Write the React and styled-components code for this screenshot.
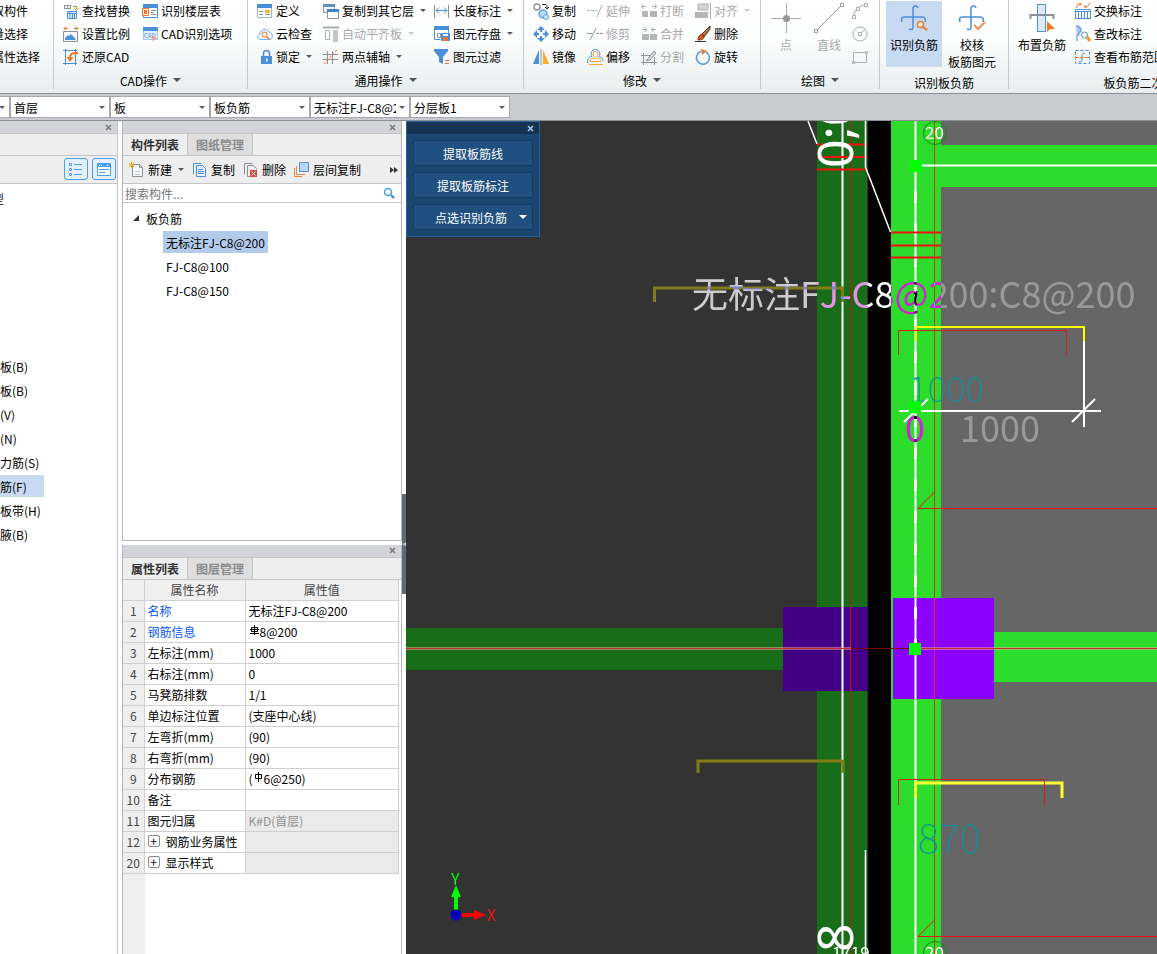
import React, { useState } from 'react'
import styled, { createGlobalStyle } from 'styled-components'

const Global = createGlobalStyle`
  * { box-sizing: border-box; }
  body {
    margin: 0;
    background: #fff;
    color: #000;
    font: 12px/17px "Noto Sans CJK SC", "Open Sans", sans-serif;
    font-kerning: none;
  }
  button, input, select { font: inherit; font-kerning: none; color: inherit; }
  button { border: 0; padding: 0; background: none; }
`

/* ---------- icons ---------- */

const B = '#4a8fdc'
const O = '#ee7722'
const G = '#8c9299'
const D = '#aaadb0'

const icons = {
  find: (
    <>
      <path d="M1 2.5h7M1 5.5h7M1.5 2v4M4.5 2v4M7.5 2v4" stroke={G} />
      <path d="M10 3.5h3.5V6M11.5 5.5l2 2 2-2" stroke={O} />
      <path d="M4.5 8.5h9v7h-9z" stroke={B} fill="#e3effb" />
      <path d="M4.5 10.5h9M7 9v7M9.5 11v4M11.5 11v4" stroke={B} />
    </>
  ),
  scale: (
    <>
      <path d="M1 2.5h4M3 .5l-2 2 2 2M11 2.5h4M13 .5l2 2-2 2" stroke={O} />
      <path d="M.5 5.5h14v10H.5z" stroke={G} fill="#f5f7f9" />
      <path d="M2 14v-2l3-3 1 1 2-2 3 3 2 3z" fill={B} />
    </>
  ),
  restore: (
    <>
      <path d="M0 1.5h14M2.5 0v16M12.5 0v16M0 14.5h14" stroke={B} />
      <path d="M15 4h-3c-4 0-5 2-5 5" stroke={O} strokeWidth="2" />
      <path d="M3.500 8h7L7 13z" fill={O} />
    </>
  ),
  floorTable: (
    <>
      <path d="M1.500 2.500h14v12h-14z" stroke={B} fill="#fff" />
      <path d="M1 1h15v4H1z" fill={B} />
      <path d="M.5 5.500h6v7h-6z" stroke={O} fill="#fff" />
      <path d="M2 7h3v4H2z" fill={O} />
      <path d="M9 7.500h5M9 9.500h3M9 11.500h5" stroke={G} />
    </>
  ),
  cadOption: (
    <>
      <path d="M1.500 2.500h14v11h-14z" stroke="#a9c8ea" fill="#e3effb" />
      <path d="M1 1h15v4H1z" fill={B} />
      <text x="2" y="12" fontSize="6" fill={B}>CAD</text>
      <path d="M10 9l5 4-3 0-1 3z" fill="#f49a6a" />
    </>
  ),
  define: (
    <>
      <path d="M.5 2.500h14v12H.5z" stroke="#a5b6c8" fill="#fff" />
      <path d="M0 1h15v4H0z" fill={B} />
      <path d="M2 8.500h4M2 11.500h4" stroke={G} />
      <path d="M8 7h5v3H8z" fill="#f8b43a" />
      <path d="M8 11.500h5" stroke={G} />
    </>
  ),
  cloud: (
    <>
      <path d="M4 13.500C.5 13.500-.5 9 3 8c0-5 7-6.500 9-2 4 0 4.500 7 1 7.500z" stroke="#79aee6" fill="#eef6fd" />
      <circle cx="7.500" cy="8.500" r="2.500" stroke={O} />
      <path d="M9.500 10.500l2.500 2.500" stroke={O} strokeWidth="1.500" />
    </>
  ),
  lock: (
    <>
      <path d="M6.500 8V4.500a3 3 0 0 1 6 0V8" stroke={B} strokeWidth="1.500" />
      <path d="M4 7h11v8H4z" fill={B} />
      <path d="M9 9.500h1.500v3H9z" fill="#fff" />
    </>
  ),
  copyFloor: (
    <>
      <path d="M.5 2.500h11v7H.5z" stroke={G} fill="#fff" />
      <path d="M0 1h12v3H0z" fill="#5d8fc9" />
      <path d="M4.500 7.500h11v8h-11z" stroke={G} fill="#fff" />
      <path d="M4 6h12v3H4z" fill="#3f81d2" />
    </>
  ),
  align: (
    <>
      <path d="M0 1.500h16" stroke={D} strokeWidth="2" />
      <path d="M2.500 4.500h4v9h-4z" stroke={D} />
      <path d="M10 4h5v12h-5z" fill="#c4c6c8" />
    </>
  ),
  axis: (
    <>
      <path d="M0 5.500h15M0 10.500h15M4.500 2v13M9.500 2v13" stroke={G} />
      <path d="M1 15L14 1" stroke={O} strokeDasharray="3 1" />
    </>
  ),
  length: (
    <>
      <path d="M.5 2v13M14.500 2v13" stroke={G} />
      <path d="M2 7.500h11M5 4.500l-3 3 3 3M10 4.500l3 3-3 3" stroke={B} />
    </>
  ),
  save: (
    <>
      <path d="M.5 13.500v-12h14v6M.5 13.500h6" stroke={B} fill="#fff" />
      <path d="M0 0h15v4H0z" fill={B} />
      <path d="M3.500 7.500h3v4h-3z" stroke={G} />
      <path d="M7.500 7.500h8v7h-8z" fill={B} stroke={B} />
      <path d="M9 8h5v2H9z" fill="#fff" />
      <path d="M9 11h5v4H9z" fill={O} />
    </>
  ),
  filter: (
    <>
      <path d="M0 0h14v2L9 8v7l-4-2V8L0 2z" fill={B} />
      <path d="M11 11.500h4M11 14.500h4" stroke={O} />
    </>
  ),
  copy: (
    <>
      <circle cx="4" cy="4" r="3" stroke={G} strokeWidth="1.500" fill="#fff" />
      <circle cx="10" cy="11" r="4" stroke="#5ba2e3" strokeWidth="1.500" fill="#b9dbf8" />
      <circle cx="13" cy="14" r="2.500" stroke="#5ba2e3" fill="#cfe6fa" />
      <path d="M9 1.500h3c2 0 2 1 2 4M12 4l2 2 2-2" stroke="#222" />
    </>
  ),
  extend: <path d="M0 7.500h3M4 7.500h3M8 7.500h2M10 14l5-12" stroke={D} />,
  trim: <path d="M0 7.500h5M3 14L9 2M9 7.500h3M13 7.500h3" stroke="#8f9499" />,
  breakUp: (
    <>
      <path d="M1 8h6v6H1zM9 8h7v6H9z" fill="#b3b5b7" />
      <path d="M0 3.500h5M2.500 1l-2 2.500 2 2.500M11 3.500h5M13.500 1l2 2.500-2 2.500" stroke={D} />
    </>
  ),
  merge: (
    <>
      <path d="M1 8h15v6H1z" fill="#b3b5b7" />
      <path d="M8.500 8v6" stroke="#fff" />
      <path d="M1 3.500h5M3.500 1l2 2.500-2 2.500M10 3.500h5M12.500 1l-2 2.500 2 2.500" stroke={D} />
    </>
  ),
  split: (
    <>
      <path d="M0 6.500h9M0 13.500h16M2.500 4v12M13.500 8v8" stroke="#8f9499" />
      <path d="M5 12L13 2l2 2-6 7z" fill="#d4d6d8" stroke="#8f9499" />
    </>
  ),
  alignTo: (
    <>
      <path d="M3 1h10v6H3z" fill="#d3d5d7" stroke={D} />
      <path d="M0 9h13v6H0z" fill="#b3b5b7" />
      <path d="M15.500 0v16" stroke={D} />
    </>
  ),
  move: (
    <g fill={B}>
      <path d="M8 0l4 4H9v2H7V4H4zM8 16l4-4H9v-2H7v2H4zM0 8l4-4v3h2v2H4v3zM16 8l-4-4v3h-2v2h2v3z" />
    </g>
  ),
  brush: (
    <>
      <path d="M15 0L7 8l2 3 6-8z" fill="#a9794a" stroke="#4f3219" />
      <path d="M7 8l2 3c-1 3-4 3-6 3 0-2 1-5 4-6z" fill="#d9551c" stroke="#8c2f0d" />
      <path d="M0 15.500h11" stroke="#333" />
    </>
  ),
  mirror: (
    <>
      <path d="M6 1v14H0z" fill={B} />
      <path d="M10 1v14h6z" fill="#f8ae2c" />
      <path d="M8 0v16" stroke={G} />
    </>
  ),
  offset: (
    <>
      <path d="M1.500 13.500h-1c0-4 1-5.500 4.500-6-2-3-.5-7 3.500-7s5.500 4 3.500 7c3 .5 4 2 4 5" stroke="#5b9bdf" fill="#e3f0fc" />
      <path d="M3 12.500c0-2 1-3 4.500-3 0-2-1.500-3-1.500-4.500a2.500 2.500 0 0 1 5 0c0 1.500-1.500 2.500-1.500 4.500 3.500 0 4.500 1 4.500 3z" stroke="#f5a623" fill="#fff" />
      <path d="M2 15.500h14" stroke="#f5a623" />
    </>
  ),
  rotate: (
    <>
      <path d="M6 2.500a6.500 6.500 0 1 0 5 .5" stroke="#5b9bdf" strokeWidth="1.500" />
      <path d="M6 0l6 2-5 4z" fill={O} />
    </>
  ),
  arc: (
    <>
      <path d="M2 13C2 7 6 3 13 2" stroke={D} />
      <path d="M.5 12.500h3v3h-3zM12.500.5h3v3h-3zM4.500 4.500h3v3h-3z" stroke={D} fill="#fff" />
    </>
  ),
  circle: (
    <>
      <circle cx="8" cy="8" r="7" stroke={D} />
      <path d="M6.500 6.500h3v3h-3z" stroke={D} fill="#fff" />
      <path d="M9 7l4-4" stroke={D} />
    </>
  ),
  rect: (
    <>
      <path d="M1.500 3.500h13v10h-13z" stroke={D} />
      <path d="M.5 12.500h2v2h-2zM13.500 2.500h2v2h-2z" stroke={D} fill="#fff" />
    </>
  ),
  swap: (
    <>
      <path d="M1 5l2-4h4M5 0v3M9 4h3l3-4M10 2v3" stroke={O} />
      <path d="M.5 6.500h15M.5 8.500h15M.5 7v8M3.500 8v8M6.500 8v8M9.500 8v8M12.500 8v8M15.500 7v8M0 15.500h16" stroke={B} />
    </>
  ),
  edit: (
    <>
      <path d="M1 0h3v2h2v4H4v3H2v6" stroke={B} fill="#a9ccf3" />
      <circle cx="9.500" cy="9" r="3" stroke={B} fill="#fff" />
      <path d="M12 11l3 4" stroke="#f29a1f" strokeWidth="3" />
    </>
  ),
  range: (
    <>
      <path d="M.5 1.500h14v13H.5z" stroke={B} strokeDasharray="3 2" />
      <path d="M0 8.500h15" stroke={O} strokeDasharray="4 1" />
      <path d="M10 4.500c-2-1-3 0-3 2v5c0 1-1 2-3 1" stroke={B} />
    </>
  ),
  newItem: (
    <>
      <path d="M3.500 2.500h7l3 3v9h-10z" stroke={G} fill="#f5f7f8" />
      <path d="M10.500 2.500v3h3" stroke={G} />
      <path d="M6 9.500h5M6 12.500h5" stroke="#c6cacd" />
      <path d="M0 1l5 4M5 1L0 5M2.500 0v6M0 3h5" stroke="#f5a623" />
    </>
  ),
  copyDoc: (
    <>
      <path d="M1.500 12.500v-11h8" stroke={B} />
      <path d="M4.500 3.500h6l3 3v8h-9z" stroke={B} fill="#eaf3fc" />
      <path d="M6 7.500h5M6 9.500h6M6 11.500h6" stroke={B} />
    </>
  ),
  removeDoc: (
    <>
      <path d="M1.500 12.500v-11h8M4.500 14.500v-11h6l3 3v1M4.500 14.500H7" stroke={G} />
      <path d="M7 8h7v7H7z" fill="#d94a4a" />
      <path d="M8.500 9.500l4 4M12.500 9.500l-4 4" stroke="#fff" />
    </>
  ),
  layers: (
    <>
      <path d="M.5 6v8.500H8" stroke="#f0883a" />
      <path d="M2.500 4v8.500H11" stroke="#f0883a" />
      <path d="M5.500.5h9v9h-9z" stroke="#5590dd" fill="#b9d4fb" />
    </>
  ),
  search: (
    <>
      <circle cx="7" cy="7" r="3.500" stroke="#4aa3df" strokeWidth="1.500" />
      <path d="M10 10l3 3" stroke="#2e86c8" strokeWidth="2" />
    </>
  ),
  listView: (
    <>
      <path d="M1.500 2.500h2v2h-2zM1.500 7.500h2v2h-2zM1.500 12.500h2v2h-2z" stroke="#4a9ff0" />
      <path d="M6 3.500h8M6 8.500h8M6 13.500h8" stroke="#4a9ff0" />
    </>
  ),
  formView: (
    <>
      <path d="M1.500 2.500h13v12h-13z" stroke="#4a9ff0" fill="#fff" />
      <path d="M1 2h14v4H1z" fill="#4a9ff0" />
      <path d="M3 4.500h4M11 4.500h2" stroke="#fff" strokeDasharray="1 1" />
      <path d="M3 8.500h10M3 11.500h6" stroke="#4a9ff0" />
    </>
  ),
}

const bigIcons = {
  point: (
    <>
      <path d="M0 15.500h30M15.500 0v30" stroke={D} />
      <circle cx="15.500" cy="15.500" r="3.500" fill="#999" />
    </>
  ),
  line: (
    <>
      <path d="M3 27L27 3" stroke="#999" />
      <path d="M.5 26.500h3v3h-3zM26.500.5h3v3h-3z" stroke="#999" fill="#fff" />
    </>
  ),
  identify: (
    <>
      <path d="M19 5c-1-3-5-3-5 1v18c0 3-2 3-4 2M3 19c-2-6 3-5 5-5h15c3 0 4 2 3 5" stroke={B} strokeWidth="1.500" />
      <circle cx="21.500" cy="21.500" r="3" stroke={O} fill="#fff" strokeWidth="1.500" />
      <path d="M24 24l4 3" stroke={O} strokeWidth="2" />
    </>
  ),
  check: (
    <>
      <path d="M19 5c-1-3-5-3-5 1v18c0 3-2 3-4 2M3 19c-2-6 3-5 5-5h15c3 0 4 2 3 5" stroke={B} strokeWidth="1.500" />
      <path d="M17 22l4 4 7-7" stroke="#f58c5c" strokeWidth="2" />
    </>
  ),
  place: (
    <>
      <path d="M10.500 1.500h8v27h-8z" stroke={B} fill="#dfeafb" />
      <path d="M3.500 16v-4h23v4" stroke="#84909b" strokeWidth="2" />
      <path d="M20 18v11l3-3h5z" fill={O} />
    </>
  ),
}

const Svg = styled.svg`
  flex: none;
  overflow: visible;
`

const Icon = ({ name, size = 16 }) => (
  <Svg width={size} height={size} viewBox={`0 0 ${size} ${size}`} fill="none" aria-hidden="true">
    {size === 30 ? bigIcons[name] : icons[name]}
  </Svg>
)

const Caret = styled.span`
  flex: none;
  border: ${p => (p.$big ? 4 : 3)}px solid transparent;
  border-top-color: currentColor;
  border-bottom: 0;
  margin-left: 3px;
  opacity: 0.65;
`

/* ---------- ribbon ---------- */

const Page = styled.div`
  display: flex;
  flex-direction: column;
  min-height: 100vh;
  overflow: hidden;
`

const Ribbon = styled.header`
  display: flex;
  overflow: hidden;
  padding-bottom: 4px;
  background: linear-gradient(#fff, #fdfefe 40%, #e8edee);
  border-bottom: 1px solid #8b8f94;
`

const Group = styled.section`
  flex: none;
  min-width: ${p => p.$min || 0}px;
  border-right: 1px solid #c6cacc;
`

const GroupBody = styled.div`
  display: flex;
  height: 67px;
  gap: ${p => p.$gap || 0}px;
  padding: 0 ${p => p.$right || 0}px 0 ${p => p.$left || 0}px;
`

const Tools = styled.div`
  display: grid;
  grid-auto-flow: column;
  grid-template-rows: repeat(3, 21px);
  grid-template-columns: ${p => p.$cols};
  row-gap: 2px;
`

const GroupLabel = styled.div`
  display: flex;
  align-items: center;
  justify-content: center;
  gap: 3px;
  height: 22px;
  padding-top: ${p => (p.$low ? 9 : 4)}px;
`

const ToolButton = styled.button`
  display: flex;
  align-items: center;
  gap: 3px;
  white-space: nowrap;
  color: ${p => (p.disabled ? '#aaa' : '#000')};
`

const BigButton = styled.button`
  display: flex;
  flex-direction: column;
  align-items: center;
  width: ${p => p.$width || 56}px;
  height: 66px;
  margin-top: 1px;
  padding-top: 2px;
  line-height: 17px;
  white-space: pre;
  color: ${p => (p.disabled ? '#aaa' : '#000')};
  background: ${p => (p.$active ? '#c8daf1' : 'none')};
  svg { margin-bottom: 3px; }
`

const groups = [
  {
    label: 'CAD操作', cols: '79px 93px', right: 12,
    tools: [
      ['find', '查找替换'], ['scale', '设置比例'], ['restore', '还原CAD'],
      ['floorTable', '识别楼层表'], ['cadOption', 'CAD识别选项'],
    ],
  },
  {
    label: '通用操作', cols: '66px 111px 89px', right: 0,
    tools: [
      ['define', '定义'], ['cloud', '云检查'], ['lock', '锁定', 'caret'],
      ['copyFloor', '复制到其它层', 'caret'], ['align', '自动平齐板', 'caret', true], ['axis', '两点辅轴', 'caret'],
      ['length', '长度标注', 'caret'], ['save', '图元存盘', 'caret'], ['filter', '图元过滤'],
    ],
  },
  {
    label: '修改', cols: '54px 54px 54px 65px', right: 0,
    tools: [
      ['copy', '复制'], ['move', '移动'], ['mirror', '镜像'],
      ['extend', '延伸', '', true], ['trim', '修剪', '', true], ['offset', '偏移'],
      ['breakUp', '打断', '', true], ['merge', '合并', '', true], ['split', '分割', '', true],
      ['alignTo', '对齐', 'caret', true], ['brush', '删除'], ['rotate', '旋转'],
    ],
  },
]

const Tool = ({ icon, text, caret, disabled }) => (
  <ToolButton disabled={disabled}>
    {icon && <Icon name={icon} />}
    {text}
    {caret && <Caret />}
  </ToolButton>
)

const ClippedTools = styled.div`
  width: 53px;
  padding-bottom: 22px;
  overflow: hidden;
  > div { margin-left: -20px; }
`

const RibbonBar = () => (
  <Ribbon>
    <Group>
      <ClippedTools>
        <Tools $cols="73px">
          <Tool text="提取构件" />
          <Tool text="批量选择" />
          <Tool text="按属性选择" />
        </Tools>
      </ClippedTools>
    </Group>
    {groups.map(g => (
      <Group key={g.label}>
        <GroupBody $left={9} $right={g.right}>
          <Tools $cols={g.cols}>
            {g.tools.map(([icon, text, caret, off]) => (
              <Tool key={text} icon={icon} text={text} caret={caret} disabled={off} />
            ))}
          </Tools>
        </GroupBody>
        <GroupLabel>{g.label}<Caret $big /></GroupLabel>
      </Group>
    ))}
    <Group>
      <GroupBody $left={5} $right={11} $gap={2}>
        <BigButton $width={40} disabled><Icon name="point" size={30} />点</BigButton>
        <BigButton $width={42} disabled><Icon name="line" size={30} />直线</BigButton>
        <Tools $cols="16px">
          <ToolButton disabled aria-label="弧"><Icon name="arc" /></ToolButton>
          <ToolButton disabled aria-label="圆"><Icon name="circle" /></ToolButton>
          <ToolButton disabled aria-label="矩形"><Icon name="rect" /></ToolButton>
        </Tools>
      </GroupBody>
      <GroupLabel>绘图<Caret $big /></GroupLabel>
    </Group>
    <Group>
      <GroupBody $left={6} $right={8} $gap={2}>
        <BigButton $active><Icon name="identify" size={30} />识别负筋</BigButton>
        <BigButton><Icon name="check" size={30} />{'校核\n板筋图元'}</BigButton>
      </GroupBody>
      <GroupLabel $low>识别板负筋</GroupLabel>
    </Group>
    <Group $min={274}>
      <GroupBody $left={5} $gap={5}>
        <BigButton><Icon name="place" size={30} />布置负筋</BigButton>
        <Tools $cols="auto">
          <Tool icon="swap" text="交换标注" />
          <Tool icon="edit" text="查改标注" />
          <Tool icon="range" text="查看布筋范围" />
        </Tools>
      </GroupBody>
      <GroupLabel $low>板负筋二次编辑</GroupLabel>
    </Group>
  </Ribbon>
)

/* ---------- selector bar ---------- */

const SelectorBar = styled.div`
  display: flex;
  overflow: hidden;
  padding: 2px 0;
  background: #c9cbd0;
  border-bottom: 1px solid #8b8f94;
`

const Combo = styled.label`
  flex: none;
  display: flex;
  align-items: center;
  width: 100px;
  height: 22px;
  padding-right: 4px;
  background: #fff;
  border: 1px solid #a7a9ac;
  &:first-child { margin-left: -90px; }
`

const Select = styled.select`
  flex: 1;
  min-width: 0;
  height: 20px;
  padding: 0 0 0 3px;
  border: 0;
  background: none;
  appearance: none;
  text-overflow: clip;
`

const combos = ['楼层', '首层', '板', '板负筋', '无标注FJ-C8@200', '分层板1']

const Selectors = () => (
  <SelectorBar>
    {combos.map(c => (
      <Combo key={c}>
        <Select aria-label={c}><option>{c}</option></Select>
        <Caret />
      </Combo>
    ))}
  </SelectorBar>
)

/* ---------- docked panels ---------- */

const Workspace = styled.main`
  flex: 1;
  display: flex;
  min-height: 0;
`

const NavPanel = styled.aside`
  flex: none;
  width: 118px;
  margin-right: 4px;
  overflow: hidden;
  border-right: 1px solid #c3c5ca;
`

const Docks = styled.div`
  flex: none;
  display: flex;
  flex-direction: column;
  gap: 4px;
  width: 280px;
`

const Dock = styled.section`
  flex: ${p => p.$grow} 1 0;
  display: flex;
  flex-direction: column;
  overflow: hidden;
  border: 1px solid #b4b6ba;
  border-top: 0;
  border-bottom-width: ${p => (p.$open ? 0 : 1)}px;
`

const TitleBar = styled.div`
  display: flex;
  justify-content: flex-end;
  align-items: center;
  height: 12px;
  padding-right: 5px;
  background: #d4d5da;
`

const CloseButton = styled.button`
  display: flex;
  color: ${p => p.$color || '#777'};
`

const Close = ({ color }) => (
  <CloseButton $color={color} aria-label="关闭">
    <Svg width="7" height="7" viewBox="0 0 7 7"><path d="M1 1l5 5M6 1L1 6" stroke="currentColor" strokeWidth="1.500" /></Svg>
  </CloseButton>
)

const Tabs = styled.div`
  display: flex;
  height: 23px;
  background: #eee;
  border-top: 1px solid #c3c5ca;
  border-bottom: 1px solid #c3c5ca;
`

const Tab = styled.button`
  width: 65px;
  font-weight: 700;
  color: ${p => (p.$active ? '#333' : '#8a8a8a')};
  background: ${p => (p.$active ? '#eee' : '#dedede')};
  border-right: 1px solid #c3c5ca;
`

const NavTools = styled.div`
  display: flex;
  justify-content: flex-end;
  gap: 4px;
  height: 28px;
  padding: 2px 1px;
  background: #eee;
  border-bottom: 1px solid #c3c5ca;
`

const ViewButton = styled.button`
  display: flex;
  align-items: center;
  justify-content: center;
  width: 24px;
  height: 22px;
  background: #e4f0fc;
  border: 1px solid #4a9ff0;
  border-radius: 3px;
`

const NavTitle = styled.div`
  margin: 6px 0 148px -44px;
  white-space: nowrap;
`

const NavItem = styled.button`
  display: block;
  height: 22px;
  margin: 0 0 2px -24px;
  padding-right: 17px;
  white-space: nowrap;
  background: ${p => (p.$active ? '#c8daf1' : 'none')};
`

const navItems = ['现浇板(B)', '螺旋板(B)', '柱帽(V)', '板洞(N)', '板受力筋(S)', '板负筋(F)', '楼层板带(H)', '板加腋(B)']

const Navigation = () => (
  <NavPanel>
    <TitleBar><Close /></TitleBar>
    <Tabs />
    <NavTools>
      <ViewButton aria-label="列表"><Icon name="listView" /></ViewButton>
      <ViewButton aria-label="表单"><Icon name="formView" /></ViewButton>
    </NavTools>
    <NavTitle>常用类型</NavTitle>
    {navItems.map(item => <NavItem key={item} $active={item === '板负筋(F)'}>{item}</NavItem>)}
  </NavPanel>
)

const ListTools = styled.div`
  display: flex;
  align-items: center;
  gap: 8px;
  height: 28px;
  padding: 0 3px 0 6px;
  color: #333;
  background: #eee;
  border-bottom: 1px solid #c3c5ca;
  > :last-child { margin-left: auto; }
`

const SearchBox = styled.div`
  display: flex;
  align-items: center;
  height: 19px;
  padding: 0 4px 0 2px;
  border-bottom: 1px solid #c3c5ca;
`

const SearchInput = styled.input`
  flex: 1;
  min-width: 0;
  padding: 0;
  border: 0;
  outline: 0;
  &::placeholder { color: #777; opacity: 1; }
`

const Tree = styled.div`
  display: flex;
  flex-direction: column;
  align-items: flex-start;
  gap: 2px;
  padding: 4px 10px;
`

const TreeRoot = styled.button`
  display: flex;
  align-items: center;
  gap: 7px;
  height: 22px;
`

const TreeItem = styled.button`
  height: 22px;
  margin-left: 30px;
  padding: 0 3px;
  background: ${p => (p.$active ? '#b3cbeb' : 'none')};
`

const parts = ['无标注FJ-C8@200', 'FJ-C8@100', 'FJ-C8@150']

const PartList = () => {
  const [selected, setSelected] = useState(parts[0])
  return (
    <Dock $grow={419}>
      <TitleBar><Close /></TitleBar>
      <Tabs>
        <Tab $active>构件列表</Tab>
        <Tab>图纸管理</Tab>
      </Tabs>
      <ListTools>
        <Tool icon="newItem" text="新建" caret />
        <Tool icon="copyDoc" text="复制" />
        <Tool icon="removeDoc" text="删除" />
        <Tool icon="layers" text="层间复制" />
        <ToolButton aria-label="更多">
          <Svg width="8" height="6" viewBox="0 0 8 6"><path d="M0 0l4 3-4 3zM4 0l4 3-4 3z" fill="#333" /></Svg>
        </ToolButton>
      </ListTools>
      <SearchBox>
        <SearchInput placeholder="搜索构件..." aria-label="搜索构件" />
        <Icon name="search" />
      </SearchBox>
      <Tree>
        <TreeRoot>
          <Svg width="6" height="6" viewBox="0 0 6 6"><path d="M6 0v6H0z" fill="#333" /></Svg>
          板负筋
        </TreeRoot>
        {parts.map(p => (
          <TreeItem key={p} $active={p === selected} onClick={() => setSelected(p)}>{p}</TreeItem>
        ))}
      </Tree>
    </Dock>
  )
}

const TableArea = styled.div`
  flex: 1;
  padding-right: 2px;
  background: linear-gradient(to right, #efefef 22px, #fff 22px);
`

const Table = styled.table`
  width: 100%;
  table-layout: fixed;
  border-collapse: collapse;
  th, td {
    height: 21px;
    padding: 0 0 0 3px;
    line-height: 18px;
    text-align: left;
    font-weight: 400;
    white-space: nowrap;
    border-right: 1px solid #cfcfcf;
    border-bottom: 1px solid #cfcfcf;
  }
  thead th { padding: 0; text-align: center; color: #444; background: #efefef; }
  tbody th { padding: 0; text-align: center; color: #444; background: #efefef; }
`

const NameCell = styled.td`
  background: #fff;
  color: ${p => (p.$link ? '#0d57f0' : '#000')};
`

const ValueCell = styled.td`
  background: ${p => (p.$locked ? '#eaeaea' : '#fff')};
  color: ${p => (p.$locked ? '#909090' : '#000')};
`

const Expander = styled.button`
  width: 12px;
  height: 12px;
  margin-right: 6px;
  border: 1px solid #888;
  border-radius: 2px;
  background: #fff;
  line-height: 8px;
  vertical-align: 1px;
`

const Grade = ({ bar }) => (
  <Svg width="11" height="12" viewBox="-1 0 11 12" fill="none" stroke="#000">
    <path d="M1.500 2.500h6v4h-6zM4.500 0v10" />
    {bar && <path d="M0 8.500h9M0 4.500h9" />}
  </Svg>
)

const rows = [
  [1, '名称', '无标注FJ-C8@200'],
  [2, '钢筋信息', <><Grade bar />8@200</>],
  [3, '左标注(mm)', '1000'],
  [4, '右标注(mm)', '0'],
  [5, '马凳筋排数', '1/1'],
  [6, '单边标注位置', '(支座中心线)'],
  [7, '左弯折(mm)', '(90)'],
  [8, '右弯折(mm)', '(90)'],
  [9, '分布钢筋', <>(<Grade />6@250)</>],
  [10, '备注', ''],
  [11, '图元归属', 'K#D(首层)'],
  [12, '钢筋业务属性', ''],
  [20, '显示样式', ''],
]

const Properties = () => (
  <Dock $grow={410} $open>
    <TitleBar><Close /></TitleBar>
    <Tabs>
      <Tab $active>属性列表</Tab>
      <Tab>图层管理</Tab>
    </Tabs>
    <TableArea>
      <Table>
        <colgroup><col width="21" /><col width="101" /><col /></colgroup>
        <thead><tr><th /><th>属性名称</th><th>属性值</th></tr></thead>
        <tbody>
          {rows.map(([n, name, value]) => (
            <tr key={n}>
              <th>{n}</th>
              <NameCell $link={n < 3}>{n > 11 && <Expander aria-label="展开">+</Expander>}{name}</NameCell>
              <ValueCell $locked={n > 10}>{value}</ValueCell>
            </tr>
          ))}
        </tbody>
      </Table>
    </TableArea>
  </Dock>
)

const Splitter = styled.div`
  flex: none;
  display: flex;
  flex-direction: column;
  justify-content: center;
  width: 4px;
  padding-top: 12px;
`

const Handle = styled.button`
  height: 100px;
  background: #5f6a78;
  color: #c3cad2;
  font-size: 6px;
  overflow: hidden;
`

/* ---------- drawing ---------- */

const Canvas = styled.section`
  flex: 1;
  display: grid;
  position: relative;
  min-width: 0;
  overflow: hidden;
  background: #333;
`

const Plan = styled.svg`
  position: absolute;
  width: 100%;
  height: 100%;
  isolation: isolate;
`

const Inverted = styled.g`
  mix-blend-mode: difference;
  font: 400 36px "Noto Sans CJK SC", sans-serif;
  font-kerning: none;
  fill: #fff;
`

const CadText = styled.text`
  font: 100 ${p => p.$size}px "Noto Sans CJK SC", sans-serif;
  fill: #12929a;
`

const TurnedText = styled.text`
  font: 400 50px "Noto Sans", sans-serif;
  fill: #fff;
`

const AxisText = styled.text`
  font: 400 17px "Noto Sans CJK SC", sans-serif;
  fill: #fff;
`

const FloatPanel = styled.div`
  position: absolute;
  top: 0;
  left: 0;
  width: 134px;
  background: #1c4670;
  border: 1px solid #2563a0;
`

const FloatTitle = styled(TitleBar)`
  background: #163452;
`

const FloatBody = styled.div`
  display: flex;
  flex-direction: column;
  gap: 6px;
  padding: 6px;
`

const FloatButton = styled.button`
  display: flex;
  align-items: center;
  justify-content: center;
  height: 26px;
  color: #fff;
  background: #205080;
  border: 1px solid #163b60;
  border-radius: 2px;
  ${p => p.$menu && `
    justify-content: flex-end;
    gap: 9px;
    padding-right: 5px;
    span { opacity: 1; }
  `}
`

const Drawing = () => (
  <Plan aria-label="平面图">
    <g transform="translate(-406 -121)" fill="none">
      <g shapeRendering="crispEdges">
        <rect x="406" y="121" width="462" height="2000" fill="#333" />
        <rect x="868" y="121" width="23" height="2000" fill="#000" />
        <rect x="941" y="121" width="3000" height="2000" fill="#666" />
        <rect x="817" y="121" width="50" height="2000" fill="#186e18" />
        <rect x="891" y="121" width="50" height="2000" fill="#2cdd2c" />
        <rect x="941" y="145" width="3000" height="42" fill="#2cdd2c" />
        <rect x="406" y="628" width="378" height="42" fill="#186e18" />
        <rect x="994" y="632" width="3000" height="50" fill="#2cdd2c" />
        <rect x="783" y="607" width="85" height="84" fill="#430086" />
        <rect x="893" y="598" width="101" height="101" fill="#8b00ff" />
      </g>
      <path d="M842.500 121V2000" stroke="#fff" strokeWidth="2" />
      <path d="M850.500 121V2000" stroke="#d01010" />
      <path d="M915.500 121V2000" stroke="#fff" strokeWidth="2" />
      <path d="M915.500 191V648" stroke="#fff" strokeWidth="3" strokeDasharray="12 20" />
      <path d="M934.500 121V2000" stroke="#e82a10" />
      <path d="M817 144.500h50M817 157h50M817 169.500h50M891 232.500h50M891 245.500h50M891 257.500h50" stroke="#f01010" strokeWidth="2" />
      <path d="M808 121l9 23M865.500 121v46l25 65M865.500 850V2000" stroke="#fff" strokeWidth="1.500" />
      <path d="M921 165.500H4000" stroke="#fff" strokeWidth="2" />

      <path d="M406 648.500h445M921 648.500H4000" stroke="#f5b0a0" strokeWidth="2" />
      <path d="M406 648.500h445M921 648.500H4000" stroke="#c03030" />
      <path d="M851 648.500h60" stroke="#7a0000" />

      <path d="M654.500 302v-14h188v14M698 773v-12h145v12" stroke="#807d18" strokeWidth="3" />
      <path d="M1084 335v92" stroke="#fff" strokeWidth="2" />
      <path d="M916 341v-14h168v14" stroke="#ff0" strokeWidth="2" />
      <path d="M915.500 798v-15H1062v15" stroke="#ff3" strokeWidth="3" />
      <path d="M898.500 355v-24.500h168V355M898.500 805v-25.500h146V805" stroke="#d02020" />
      <path d="M4000 508.500H918l17-17M4000 936.500H918l17-17" stroke="#f01010" />

      <CadText $size={36} x="909" y="402">1000</CadText>
      <CadText $size={40} x="918" y="853">870</CadText>

      <path d="M899 411h202M904 422l24-23M1072 422l23-23" stroke="#fff" strokeWidth="2" />
      <path d="M910 160h12v12h-12zM909 401h12v12h-12zM909 643h12v12h-12z" fill="#0f0" />

      <circle cx="935" cy="133" r="11.500" stroke="#158a15" />
      <circle cx="935" cy="953" r="11.500" stroke="#158a15" />
      <AxisText x="925" y="139">20</AxisText>
      <AxisText x="925" y="959">20</AxisText>
      <AxisText x="832" y="959">1719</AxisText>
      <TurnedText transform="translate(853 168) rotate(-90)">0;0</TurnedText>
      <TurnedText transform="translate(853 952) rotate(-90)">8</TurnedText>

      <path d="M456 911v-15" stroke="#0f0" strokeWidth="4" />
      <path d="M451 897l5-12 5 12z" fill="#0f0" />
      <path d="M460 915h15" stroke="#f00" strokeWidth="4" />
      <path d="M474 910l12 5-12 5z" fill="#f00" />
      <circle cx="456" cy="915" r="5.500" fill="#0000b8" />
      <text x="451" y="885" fontSize="16" fill="#0f0">Y</text>
      <text x="487" y="921" fontSize="16" fill="#f01818">X</text>
    </g>
    <Inverted transform="translate(-406 -121)">
      <text x="692" y="308">无标注FJ-C8@200:C8@200</text>
      <text x="905" y="442">0</text>
      <text x="960" y="442">1000</text>
    </Inverted>
  </Plan>
)

const App = () => (
  <>
    <Global />
    <Page>
      <RibbonBar />
      <Selectors />
      <Workspace>
        <Navigation />
        <Docks>
          <PartList />
          <Properties />
        </Docks>
        <Splitter><Handle aria-label="折叠">◀</Handle></Splitter>
        <Canvas>
          <Drawing />
          <FloatPanel>
            <FloatTitle><Close color="#a9cdf0" /></FloatTitle>
            <FloatBody>
              <FloatButton>提取板筋线</FloatButton>
              <FloatButton>提取板筋标注</FloatButton>
              <FloatButton $menu>点选识别负筋<Caret $big /></FloatButton>
            </FloatBody>
          </FloatPanel>
        </Canvas>
      </Workspace>
    </Page>
  </>
)

export default App
